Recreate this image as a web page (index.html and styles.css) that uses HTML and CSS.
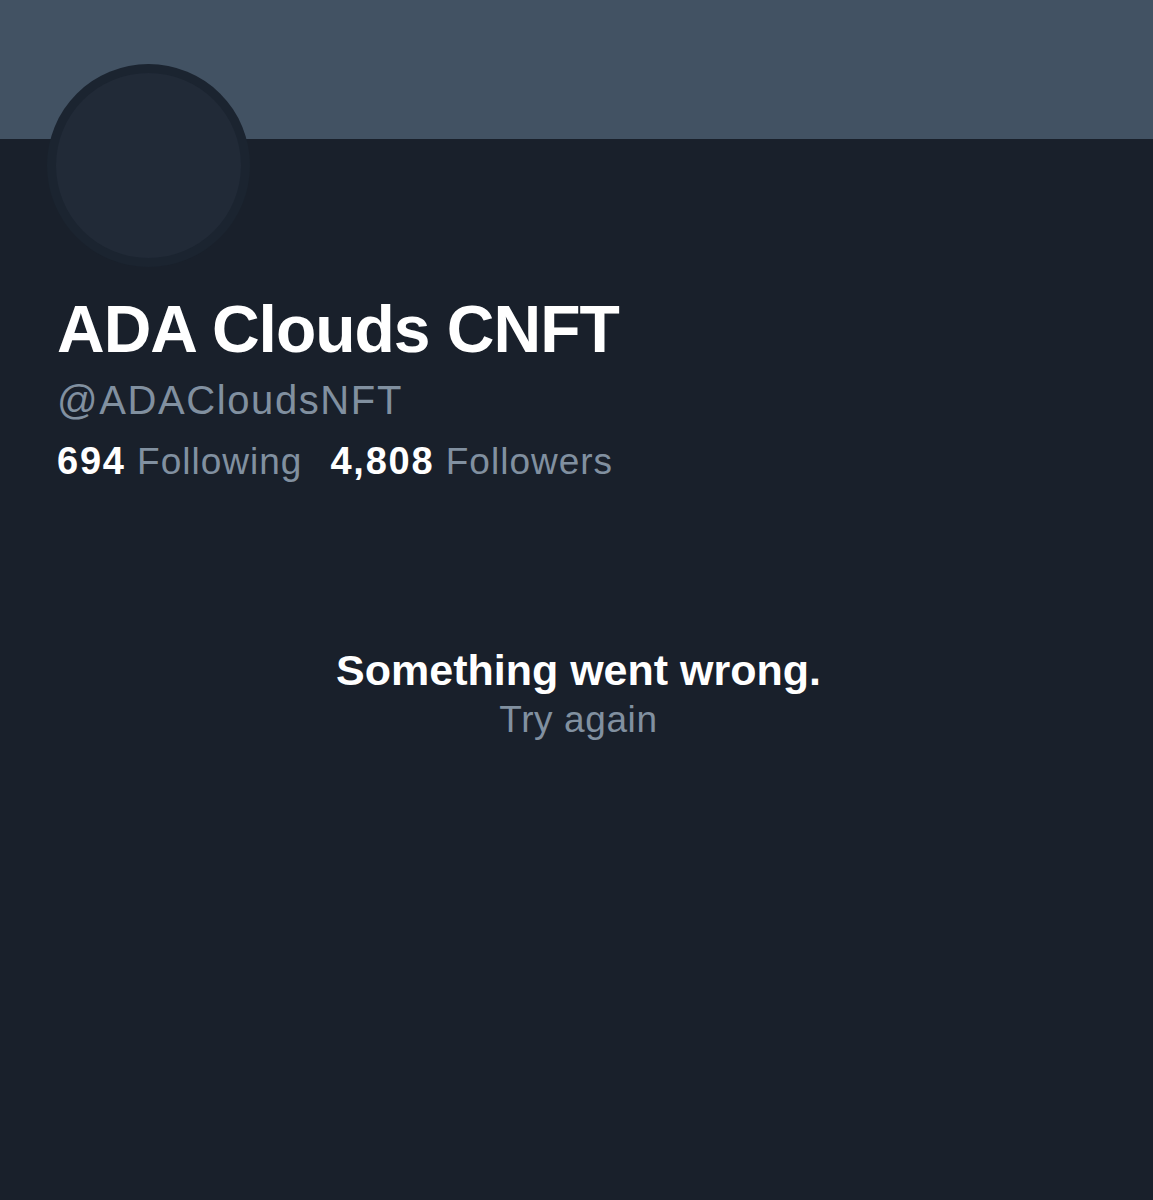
FILE: index.html
```html
<!DOCTYPE html>
<html>
<head>
<meta charset="utf-8">
<link rel="stylesheet" href="styles.css">
</head>
<body>
<div class="page">
  <div class="banner"></div>
  <div class="profile">
    <div class="avatar-row">
      <div class="avatar"><div class="avatar-inner"></div></div>
    </div>
    <h1 class="name">ADA Clouds CNFT</h1>
    <div class="handle">@ADACloudsNFT</div>
    <div class="stats">
      <span class="stat"><b>694</b> Following</span>
      <span class="stat"><b>4,808</b> Followers</span>
    </div>
  </div>
  <div class="error">
    <div class="error-title">Something went wrong.</div>
    <div class="error-retry">Try again</div>
  </div>
</div>
</body>
</html>
```
FILE: styles.css
```css
html, body {
  margin: 0;
  padding: 0;
  background: #19202b;
}
.page {
  width: 1153px;
  height: 1200px;
  background: #19202b;
  font-family: "Liberation Sans", Arial, sans-serif;
  overflow: hidden;
}
.banner {
  height: 139px;
  background: #425263;
}
.profile {
  padding: 0 57px;
}
.avatar-row {
  height: 124px;
  position: relative;
}
.avatar {
  position: absolute;
  left: -10px;
  top: -75px;
  width: 203px;
  height: 203px;
  box-sizing: border-box;
  border-radius: 50%;
  background: #1b2430;
  padding: 9px;
}
.avatar-inner {
  width: 100%;
  height: 100%;
  border-radius: 50%;
  background: #212a37;
}
.name {
  margin: 0;
  padding-top: 28px;
  font-size: 66px;
  letter-spacing: -1px;
  font-weight: 700;
  color: #ffffff;
  line-height: 76px;
}
.handle {
  margin-top: 5px;
  font-size: 40px;
  letter-spacing: 1.6px;
  line-height: 56px;
  color: #8190a0;
}
.stats {
  display: flex;
  gap: 28px;
  margin-top: 9px;
  font-size: 37px;
  letter-spacing: 1px;
  line-height: 48px;
  color: #8190a0;
}
.stat b {
  color: #ffffff;
  font-weight: 700;
  font-size: 38px;
  letter-spacing: 1.8px;
}
.error {
  margin-top: 158px;
  text-align: center;
  padding-left: 4px;
}
.error-title {
  font-size: 43px;
  font-weight: 700;
  color: #ffffff;
  line-height: 52px;
}
.error-retry {
  font-size: 37px;
  letter-spacing: 0.6px;
  line-height: 48px;
  color: #8190a0;
}
```
